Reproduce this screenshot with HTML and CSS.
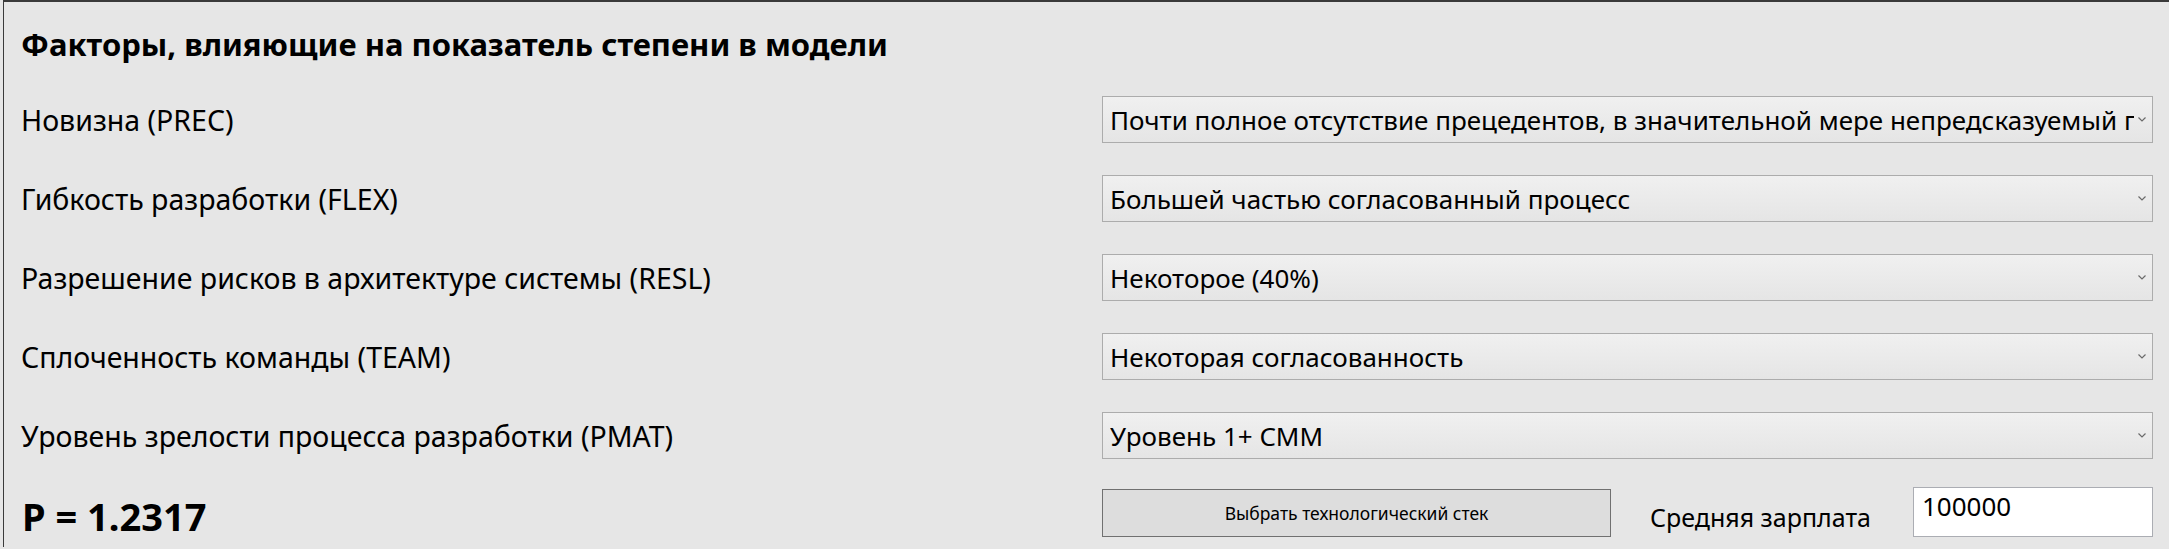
FILE: index.html
```html
<!DOCTYPE html>
<html lang="ru">
<head>
<meta charset="utf-8">
<title>Факторы</title>
<link rel="stylesheet" href="styles.css">
</head>
<body>
<div class="panel">
  <h1 class="title">Факторы, влияющие на показатель степени в модели</h1>
  <div class="row">
    <div class="label">Новизна (PREC)</div>
    <div class="combo"><span class="combo-text">Почти полное отсутствие прецедентов, в значительной мере непредсказуемый процесс</span><svg class="chev" viewBox="0 0 8 5" width="8" height="5"><path d="M0.5 0.5 L4 4 L7.5 0.5" fill="none" stroke="#6a6a6a" stroke-width="1.2"/></svg></div>
  </div>
  <div class="row">
    <div class="label">Гибкость разработки (FLEX)</div>
    <div class="combo"><span class="combo-text">Большей частью согласованный процесс</span><svg class="chev" viewBox="0 0 8 5" width="8" height="5"><path d="M0.5 0.5 L4 4 L7.5 0.5" fill="none" stroke="#6a6a6a" stroke-width="1.2"/></svg></div>
  </div>
  <div class="row">
    <div class="label">Разрешение рисков в архитектуре системы (RESL)</div>
    <div class="combo"><span class="combo-text">Некоторое (40%)</span><svg class="chev" viewBox="0 0 8 5" width="8" height="5"><path d="M0.5 0.5 L4 4 L7.5 0.5" fill="none" stroke="#6a6a6a" stroke-width="1.2"/></svg></div>
  </div>
  <div class="row">
    <div class="label">Сплоченность команды (TEAM)</div>
    <div class="combo"><span class="combo-text">Некоторая согласованность</span><svg class="chev" viewBox="0 0 8 5" width="8" height="5"><path d="M0.5 0.5 L4 4 L7.5 0.5" fill="none" stroke="#6a6a6a" stroke-width="1.2"/></svg></div>
  </div>
  <div class="row">
    <div class="label">Уровень зрелости процесса разработки (PMAT)</div>
    <div class="combo"><span class="combo-text">Уровень 1+ CMM</span><svg class="chev" viewBox="0 0 8 5" width="8" height="5"><path d="M0.5 0.5 L4 4 L7.5 0.5" fill="none" stroke="#6a6a6a" stroke-width="1.2"/></svg></div>
  </div>
  <div class="row bottom">
    <div class="result">P = 1.2317</div>
    <div class="actions">
      <button class="stack-btn" type="button">Выбрать технологический стек</button>
      <span class="salary-label">Средняя зарплата</span>
      <input class="salary-input" type="text" value="100000">
    </div>
  </div>
</div>
</body>
</html>
```
FILE: styles.css
```css
html, body {
  margin: 0;
  padding: 0;
  background: #e6e6e6;
}
body {
  width: 2169px;
  height: 549px;
  overflow: hidden;
  font-family: "Noto Sans", "Open Sans", sans-serif;
  color: #000;
}
.panel {
  margin-left: 3px;
  border-top: 2px solid #3a3a3a;
  border-left: 1px solid #3a3a3a;
  height: 547px;
  box-sizing: border-box;
  padding: 22px 16px 0 17px;
}
.title {
  margin: 0;
  font-size: 31px;
  line-height: 40px;
  font-weight: 700;
  height: 40px;
  margin-bottom: 32px;
  white-space: nowrap;
}
.row {
  display: grid;
  grid-template-columns: 1fr 1051px;
  align-items: center;
  height: 47px;
  margin-bottom: 32px;
}
.label {
  font-size: 28.5px;
  line-height: 36px;
  white-space: nowrap;
}
.combo {
  height: 47px;
  box-sizing: border-box;
  border: 1px solid #acacac;
  background: linear-gradient(#f0f0f0, #e5e5e5);
  display: flex;
  align-items: center;
  padding: 0 6px 0 7px;
}
.combo-text {
  flex: 1;
  font-size: 26px;
  white-space: nowrap;
  overflow: hidden;
  line-height: 34px;
}
.chev {
  margin-left: 4px;
  flex: none;
}
.row.bottom {
  margin-top: -4px;
  height: 50px;
  align-items: end;
}
.result {
  font-size: 38px;
  font-weight: 700;
  line-height: 40px;
  padding-bottom: 1px;
  padding-left: 1px;
}
.actions {
  display: flex;
  align-items: flex-end;
  height: 50px;
}
.stack-btn {
  width: 509px;
  height: 48px;
  margin: 0;
  border: 1px solid #707070;
  background: #dddddd;
  font-family: "Noto Sans", "Open Sans", sans-serif;
  font-size: 17.5px;
  color: #000;
  padding: 0;
}
.salary-label {
  margin-left: 39px;
  font-size: 25px;
  line-height: 32px;
  align-self: center;
  margin-top: 10px;
  white-space: nowrap;
}
.salary-input {
  margin-left: auto;
  width: 240px;
  height: 50px;
  box-sizing: border-box;
  border: 1px solid #abadb3;
  background: #fff;
  font-family: "Noto Sans", "Open Sans", sans-serif;
  font-size: 26px;
  padding: 0 0 12px 8px;
  color: #000;
  outline: none;
}
```
